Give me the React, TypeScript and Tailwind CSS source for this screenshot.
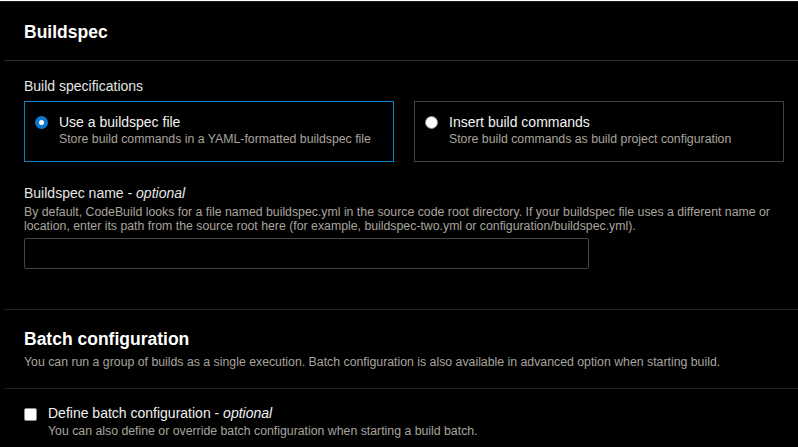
import React, { useState } from 'react';

const Radio: React.FC<{ checked: boolean }> = ({ checked }) =>
  checked ? (
    <span className="mt-[3px] flex h-[13px] w-[13px] shrink-0 items-center justify-center rounded-full bg-[#0a79cf]">
      <span className="h-[5px] w-[5px] rounded-full bg-white" />
    </span>
  ) : (
    <span className="mt-[3px] h-[13px] w-[13px] shrink-0 rounded-full border border-[#8d8d8d] bg-white" />
  );

const App: React.FC = () => {
  const [mode, setMode] = useState<'file' | 'commands'>('file');
  const [name, setName] = useState('');

  const options = [
    { id: 'file' as const, title: 'Use a buildspec file', desc: 'Store build commands in a YAML-formatted buildspec file' },
    { id: 'commands' as const, title: 'Insert build commands', desc: 'Store build commands as build project configuration' },
  ];

  return (
    <div className="min-h-screen w-full bg-black font-['Liberation_Sans',Arial,sans-serif] text-[#e9ebed]">
      <div className="h-px mt-px bg-[#1f1f1f]" />

      {/* Buildspec header */}
      <div className="h-[58px] pl-[24px] pt-[19px]">
        <h2 className="text-[17.5px] leading-[22px] font-bold text-white">Buildspec</h2>
      </div>
      <div className="ml-[4px] h-px bg-[#2b2d30]" />

      <div className="pl-[24px] pr-[14px] pt-[16px]">
        <div className="text-[14px] leading-[18px] text-[#e6e6e6]">Build specifications</div>

        <div className="mt-[6px] grid grid-cols-2 gap-[20px]">
          {options.map((o) => {
            const active = mode === o.id;
            return (
              <button
                key={o.id}
                onClick={() => setMode(o.id)}
                className={`flex items-start gap-[11px] border pl-[10px] pt-[11px] pb-[14px] text-left ${
                  active ? 'border-[#0a7fc6]' : 'border-[#3d4247]'
                }`}
              >
                <Radio checked={active} />
                <div>
                  <div className="text-[14px] leading-[18px] text-[#f2f2f2]">{o.title}</div>
                  <div className="text-[12.3px] leading-[16px] text-[#a9a49d]">{o.desc}</div>
                </div>
              </button>
            );
          })}
        </div>

        <div className="mt-[22px] text-[14px] leading-[18px] text-[#e6e6e6]">
          Buildspec name - <i>optional</i>
        </div>
        <p className="mt-[3px] text-[12.3px] leading-[14px] text-[#a9a49d]">
          By default, CodeBuild looks for a file named buildspec.yml in the source code root directory. If your buildspec
          file uses a different name or location, enter its path from the source root here (for example,
          buildspec-two.yml or configuration/buildspec.yml).
        </p>
        <input
          value={name}
          onChange={(e) => setName(e.target.value)}
          className="mt-[5px] block h-[31px] w-[565px] rounded-[2px] border border-[#3d464f] bg-black px-2 text-[14px] text-white outline-none"
        />
      </div>

      <div className="mt-[40px] ml-[4px] h-px bg-[#1f252b]" />

      {/* Batch configuration */}
      <div className="pl-[24px] pt-[18px] pb-[18px]">
        <h2 className="text-[17.5px] leading-[22px] font-bold text-white">Batch configuration</h2>
        <p className="mt-[4px] text-[12.3px] leading-[16px] text-[#a9a49d]">
          You can run a group of builds as a single execution. Batch configuration is also available in advanced option
          when starting build.
        </p>
      </div>
      <div className="ml-[4px] h-px bg-[#1f1f1f]" />

      <div className="flex items-start gap-[11px] pl-[24px] pt-[15px]">
        <span className="mt-[4px] h-[13px] w-[13px] shrink-0 rounded-[2px] border border-[#8d8d8d] bg-white" />
        <div>
          <div className="text-[14px] leading-[18px] text-[#f2f2f2]">
            Define batch configuration - <i>optional</i>
          </div>
          <div className="mt-px text-[12.3px] leading-[16px] text-[#a9a49d]">
            You can also define or override batch configuration when starting a build batch.
          </div>
        </div>
      </div>
    </div>
  );
};

export default App;
